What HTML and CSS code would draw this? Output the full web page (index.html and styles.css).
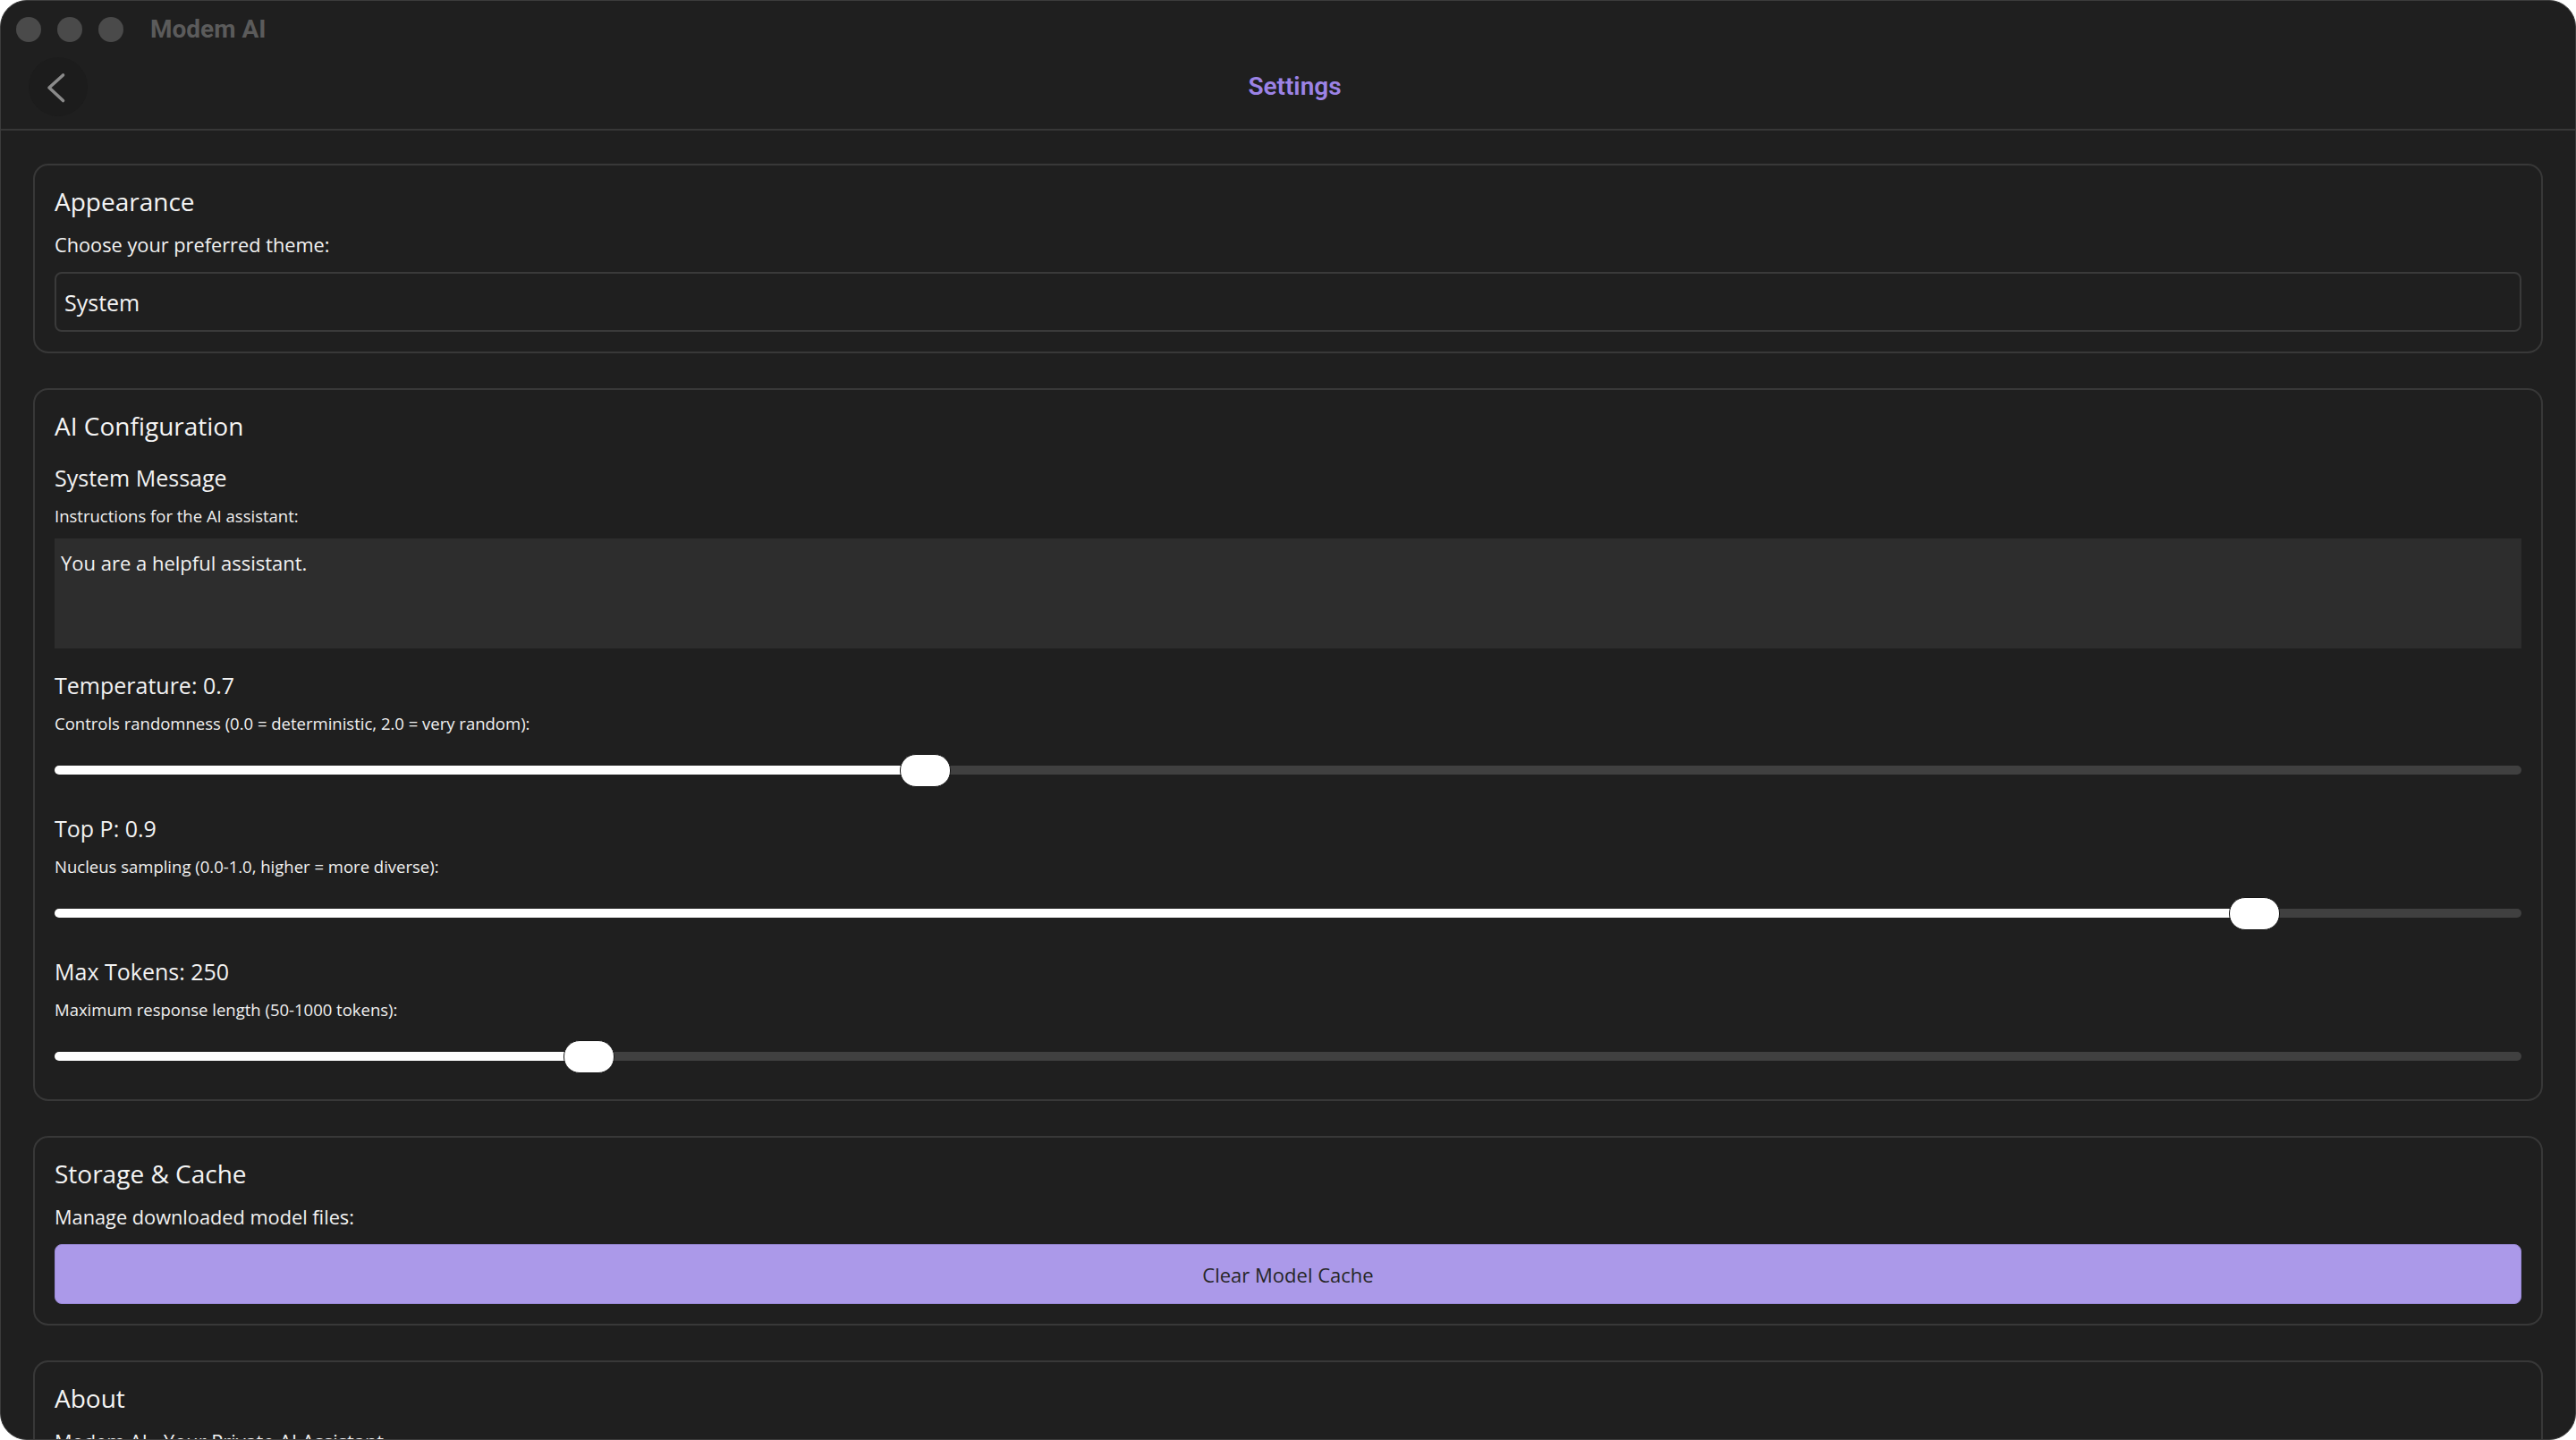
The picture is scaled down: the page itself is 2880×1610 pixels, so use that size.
FILE: index.html
```html
<!DOCTYPE html>
<html lang="en">
<head>
<meta charset="utf-8">
<title>Modem AI – Settings</title>
<link rel="stylesheet" href="styles.css">
</head>
<body>
<div class="window">
  <header class="header">
    <div class="titlebar">
      <span class="light"></span>
      <span class="light"></span>
      <span class="light"></span>
      <span class="app-name">Modem AI</span>
    </div>
    <div class="nav">
      <button class="back" aria-label="Back">
        <svg width="66" height="66" viewBox="0 0 66 66"><path d="M38.5 20 L23 34 L38.5 48.5" fill="none" stroke="#8a8a8a" stroke-width="3.6" stroke-linecap="round" stroke-linejoin="round"/></svg>
      </button>
      <h1 class="title">Settings</h1>
      <div class="nav-spacer"></div>
    </div>
  </header>

  <main class="content">
    <section class="card">
      <h2 class="card-title">Appearance</h2>
      <p class="desc">Choose your preferred theme:</p>
      <select class="select"><option>System</option></select>
    </section>

    <section class="card">
      <h2 class="card-title">AI Configuration</h2>
      <div class="group first">
        <h3 class="label">System Message</h3>
        <p class="hint">Instructions for the AI assistant:</p>
        <textarea class="textarea">You are a helpful assistant.</textarea>
      </div>
      <div class="group">
        <h3 class="label">Temperature: 0.7</h3>
        <p class="hint">Controls randomness (0.0 = deterministic, 2.0 = very random):</p>
        <div class="slider-wrap">
          <input class="slider" type="range" min="0" max="2" step="0.1" value="0.7" style="--p:0.35">
        </div>
      </div>
      <div class="group">
        <h3 class="label">Top P: 0.9</h3>
        <p class="hint">Nucleus sampling (0.0-1.0, higher = more diverse):</p>
        <div class="slider-wrap">
          <input class="slider" type="range" min="0" max="1" step="0.05" value="0.9" style="--p:0.9">
        </div>
      </div>
      <div class="group">
        <h3 class="label">Max Tokens: 250</h3>
        <p class="hint">Maximum response length (50-1000 tokens):</p>
        <div class="slider-wrap">
          <input class="slider" type="range" min="50" max="1000" step="10" value="250" style="--p:0.2105">
        </div>
      </div>
    </section>

    <section class="card">
      <h2 class="card-title">Storage &amp; Cache</h2>
      <p class="desc">Manage downloaded model files:</p>
      <button class="btn">Clear Model Cache</button>
    </section>

    <section class="card">
      <h2 class="card-title">About</h2>
      <p class="desc">Modem AI - Your Private AI Assistant</p>
    </section>
  </main>
</div>
</body>
</html>
```

FILE: styles.css
```css
* { box-sizing: border-box; }

html, body {
  margin: 0;
  padding: 0;
  background: #ffffff;
  height: 100%;
  overflow: hidden;
}

.window {
  width: 100vw;
  height: 100vh;
  background: #1f1f1f;
  border: 1px solid #3c3c3c;
  border-radius: 30px;
  overflow: hidden;
  font-family: "Open Sans", "Noto Sans", sans-serif;
  color: #f2f2f2;
}

/* ---------- header ---------- */
.header {
  height: 145px;
  padding-bottom: 14px;
  border-bottom: 2px solid #373737;
}

.titlebar {
  height: 63px;
  display: flex;
  align-items: center;
  padding-left: 17px;
}

.light {
  width: 28px;
  height: 28px;
  border-radius: 50%;
  background: #4a4a4a;
  margin-right: 18px;
}

.app-name {
  font-family: Roboto, "Liberation Sans", sans-serif;
  font-weight: 700;
  font-size: 28px;
  color: #5b5b5b;
  margin-left: 12px;
}

.nav {
  height: 66px;
  display: grid;
  grid-template-columns: 1fr auto 1fr;
  align-items: center;
  padding-left: 31px;
}

.back {
  width: 66px;
  height: 66px;
  border-radius: 50%;
  border: none;
  padding: 0;
  background: #1c1c1c;
  display: flex;
  align-items: center;
  justify-content: center;
}

.title {
  margin: 0 0 0 -16px;
  font-family: Roboto, "Liberation Sans", sans-serif;
  font-weight: 600;
  font-size: 28px;
  line-height: 36px;
  color: #9c83e6;
}

/* ---------- content ---------- */
.content {
  padding: 37px 36px 0 36px;
}

.card {
  border: 2px solid #383838;
  border-radius: 17px;
  padding: 22px;
  margin-bottom: 39px;
}

.card-title {
  margin: 0 0 16px;
  font-size: 28px;
  line-height: 36px;
  font-weight: 400;
  color: #f4f4f4;
}

.desc {
  margin: 0 0 15px;
  font-size: 21.75px;
  line-height: 30px;
  color: #f2f2f2;
}

.select {
  display: block;
  width: 100%;
  height: 67px;
  appearance: none;
  -webkit-appearance: none;
  background: #1f1f1f;
  border: 2px solid #3a3a3a;
  border-radius: 8px;
  color: #f2f2f2;
  font-family: "Open Sans", "Noto Sans", sans-serif;
  font-size: 25px;
  padding: 0 9px;
}

.group {
  display: flex;
  flex-direction: column;
  margin-top: 22px;
}
.group.first { margin-top: 23px; }

.label {
  margin: 0 0 14px;
  font-size: 25px;
  line-height: 34px;
  font-weight: 400;
  color: #f2f2f2;
}

.hint {
  margin: 0 0 13px;
  font-size: 18.5px;
  line-height: 24px;
  color: #f0f0f0;
}

.textarea {
  display: block;
  width: 100%;
  height: 123px;
  margin: 0 0 2px;
  background: #2d2d2d;
  border: none;
  border-radius: 0;
  resize: none;
  outline: none;
  color: #f2f2f2;
  font-family: "Open Sans", "Noto Sans", sans-serif;
  font-size: 22px;
  line-height: 32px;
  padding: 11px 7px;
}

/* ---------- sliders ---------- */
.slider-wrap {
  height: 40px;
  margin: 7px 0 6px;
  display: flex;
  align-items: center;
}

.slider {
  -webkit-appearance: none;
  appearance: none;
  display: block;
  width: 100%;
  height: 10px;
  margin: 0;
  padding: 0;
  background: transparent;
}

.slider::-webkit-slider-runnable-track {
  height: 10px;
  border-radius: 5px;
  background: linear-gradient(to right,
    #ffffff 0,
    #ffffff calc(28.5px + var(--p) * (100% - 57px)),
    #404040 calc(28.5px + var(--p) * (100% - 57px)),
    #404040 100%);
}

.slider::-webkit-slider-thumb {
  -webkit-appearance: none;
  appearance: none;
  width: 57px;
  height: 37px;
  margin-top: -13.5px;
  border-radius: 18px;
  background: #ffffff;
  border: 1px solid #151515;
}

/* ---------- button ---------- */
.btn {
  display: block;
  width: 100%;
  height: 67px;
  background: #ab99e9;
  border: 1px solid #9a89d8;
  border-radius: 8px;
  color: #262626;
  font-family: "Open Sans", "Noto Sans", sans-serif;
  font-size: 22px;
}
```
